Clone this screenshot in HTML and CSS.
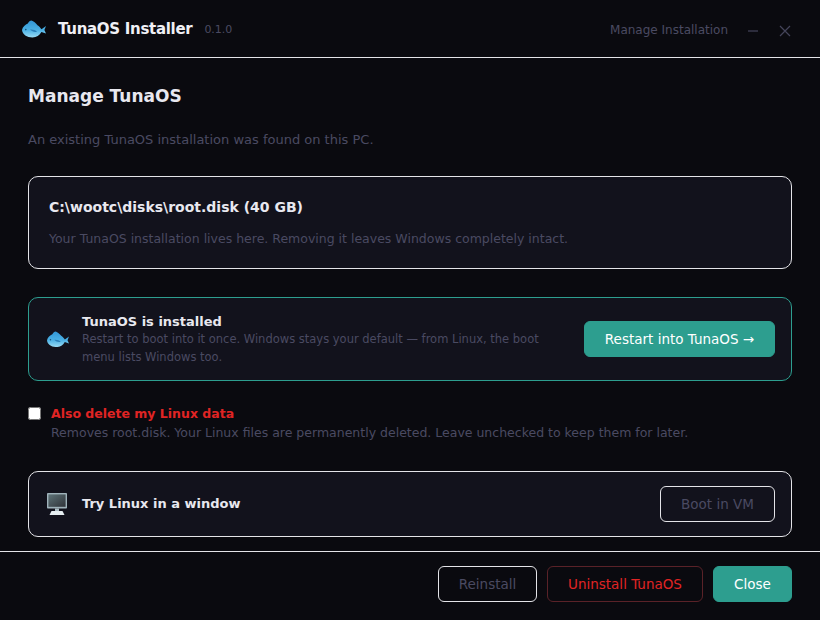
FILE: index.html
```html
<!DOCTYPE html>
<html lang="en">
<head>
<meta charset="utf-8">
<title>TunaOS Installer</title>
<link rel="stylesheet" href="styles.css">
</head>
<body>
<div class="app">
  <svg class="defs" aria-hidden="true"><defs>
    <linearGradient id="fishBody" x1="0" y1="0" x2="0" y2="1"><stop offset="0" stop-color="#3296d6"/><stop offset="0.55" stop-color="#4ab0e4"/><stop offset="1" stop-color="#9adcf5"/></linearGradient>
    <linearGradient id="screen" x1="0" y1="0" x2="1" y2="1"><stop offset="0" stop-color="#5e7378"/><stop offset="1" stop-color="#2f3238"/></linearGradient>
  </defs></svg>
  <header class="titlebar">
    <div class="brand">
      <svg class="fish fish-lg" viewBox="0 0 24 18" aria-hidden="true">
        <path d="M0 10 C0.5 7 3.5 4.8 5.8 3.6 C6.8 1.8 8 0.5 9.5 0.5 C11.5 1.2 14 3 15.5 5.2 C17 6 18.5 7.8 19.5 9.2 L24 6 L22.4 10 L24 13.6 L19.4 12 C17.6 15.4 14.5 17.5 10.5 17.5 C5 17.5 0.4 14.5 0 10 Z" fill="url(#fishBody)"/>
        <path d="M8 9.6 C10.5 9.2 13.5 10 15 11.8 C12.5 12.6 10 11.6 8 9.6 Z" fill="#2b7fb8"/>
        <circle cx="3.8" cy="9.6" r="0.8" fill="#164f78"/>
      </svg>
      <span class="app-name">TunaOS Installer</span>
      <span class="version">0.1.0</span>
    </div>
    <div class="window-side">
      <span class="mode">Manage Installation</span>
      <svg class="win-icon" viewBox="0 0 14 14" aria-hidden="true"><path d="M2 7 H12" /></svg>
      <svg class="win-icon" viewBox="0 0 14 14" aria-hidden="true"><path d="M2 2 L12 12 M12 2 L2 12" /></svg>
    </div>
  </header>

  <main class="content">
    <h1 class="heading">Manage TunaOS</h1>
    <p class="lead">An existing TunaOS installation was found on this PC.</p>

    <section class="card path-card">
      <div class="path">C:\wootc\disks\root.disk (40 GB)</div>
      <p class="path-note">Your TunaOS installation lives here. Removing it leaves Windows completely intact.</p>
    </section>

    <section class="card row-card installed">
      <svg class="fish fish-sm" viewBox="0 0 24 18" aria-hidden="true">
        <path d="M0 10 C0.5 7 3.5 4.8 5.8 3.6 C6.8 1.8 8 0.5 9.5 0.5 C11.5 1.2 14 3 15.5 5.2 C17 6 18.5 7.8 19.5 9.2 L24 6 L22.4 10 L24 13.6 L19.4 12 C17.6 15.4 14.5 17.5 10.5 17.5 C5 17.5 0.4 14.5 0 10 Z" fill="url(#fishBody)"/>
        <path d="M8 9.6 C10.5 9.2 13.5 10 15 11.8 C12.5 12.6 10 11.6 8 9.6 Z" fill="#2b7fb8"/>
        <circle cx="3.8" cy="9.6" r="0.8" fill="#164f78"/>
      </svg>
      <div class="row-text">
        <div class="row-title">TunaOS is installed</div>
        <p class="row-note">Restart to boot into it once. Windows stays your default — from Linux, the boot menu lists Windows too.</p>
      </div>
      <button class="btn btn-primary btn-restart" type="button">Restart into TunaOS →</button>
    </section>

    <label class="delete-option">
      <input class="delete-check" type="checkbox">
      <span class="delete-text">
        <span class="delete-title">Also delete my Linux data</span>
        <span class="delete-note">Removes root.disk. Your Linux files are permanently deleted. Leave unchecked to keep them for later.</span>
      </span>
    </label>

    <section class="card row-card vm">
      <svg class="monitor" viewBox="0 0 20 22" aria-hidden="true">
        <rect x="0" y="0" width="20" height="15.5" rx="0.8" fill="#9fb2ba"/>
        <rect x="1.4" y="1.4" width="17.2" height="12.4" fill="url(#screen)"/>
        <rect x="8" y="15.5" width="4" height="2.8" fill="#a9bac0"/>
        <path d="M4.5 18 H15.5 L17.5 22 H2.5 Z" fill="#e6eef1"/>
      </svg>
      <div class="row-text"><div class="row-title">Try Linux in a window</div></div>
      <button class="btn btn-outline btn-vm" type="button">Boot in VM</button>
    </section>
  </main>

  <footer class="actions">
    <button class="btn btn-outline btn-reinstall" type="button">Reinstall</button>
    <button class="btn btn-danger" type="button">Uninstall TunaOS</button>
    <button class="btn btn-primary btn-close" type="button">Close</button>
  </footer>
</div>
</body>
</html>
```

FILE: styles.css
```css
* { box-sizing: border-box; }
html, body { margin: 0; height: 100%; }
body { background: #0a0a0f; color: #e8e8ef; font-family: "DejaVu Sans", sans-serif; overflow: hidden; }
.app { width: 820px; height: 620px; display: flex; flex-direction: column; }
.defs { width: 0; height: 0; display: block; }

.titlebar { height: 58px; flex: none; display: flex; align-items: center; justify-content: space-between; padding: 1px 28px 0 22px; border-bottom: 1px solid #e4e4e8; }
.brand { display: flex; align-items: center; }
.fish { display: block; flex: none; }
.fish-lg { width: 24px; height: 18px; margin-right: 12px; }
.app-name { font-size: 15px; font-weight: 700; letter-spacing: -0.3px; color: #f0f0f5; }
.version { font-size: 11px; color: #4a4a62; margin-left: 12px; }
.window-side { display: flex; align-items: center; padding-top: 3px; }
.mode { font-size: 12px; color: #4a4a62; margin-right: 18px; position: relative; top: -1px; }
.win-icon { width: 14px; height: 14px; fill: none; stroke: #44445a; stroke-width: 1.2; display: block; }
.win-icon + .win-icon { margin-left: 18px; }

.content { flex: 1; padding: 0 28px; display: flex; flex-direction: column; min-height: 0; }
.heading { margin: 27px 0 0; font-size: 17px; line-height: 22px; font-weight: 700; color: #e8e8ef; }
.lead { margin: 25px 0 0; font-size: 13px; line-height: 16px; color: #4a4a62; }

.card { background: #12121c; border: 1px solid #e4e4e8; border-radius: 10px; }
.path-card { margin-top: 28px; height: 93px; padding: 20px 20px 0; }
.path { font-size: 14px; line-height: 20px; font-weight: 700; color: #e8e8ef; }
.path-note { margin: 14px 0 0; font-size: 12.5px; line-height: 16px; color: #4a4a62; }

.row-card { display: flex; align-items: center; padding: 0 16px 0 17px; }
.row-card .fish-sm { width: 22px; height: 16.5px; margin: 0 13px 0 1px; }
.installed { margin-top: 28px; height: 84px; border-color: #2d9e8f; }
.row-text { flex: 1; min-width: 0; }
.installed .row-text { padding-top: 2px; }
.row-title { font-size: 13px; line-height: 16px; font-weight: 700; color: #e8e8ef; }
.row-note { margin: 0; font-size: 11.5px; line-height: 18px; color: #4a4a62; width: 480px; }

.btn { font-family: inherit; font-size: 13.5px; height: 36px; border-radius: 6px; padding: 0; background: transparent; border: 1px solid #e4e4e8; }
.btn-primary { background: #2d9e8f; border-color: #2d9e8f; color: #fff; }
.btn-restart { width: 191px; }
.btn-outline { color: #4a4a62; }
.btn-reinstall { width: 99px; }
.btn-danger { width: 156px; color: #e02424; border-color: #5a2228; }

.delete-option { display: flex; align-items: flex-start; margin-top: 24px; }
.delete-check { width: 13px; height: 13px; margin: 2px 10px 0 0; flex: none; }
.delete-text { display: flex; flex-direction: column; }
.delete-title { font-size: 12.5px; line-height: 17px; font-weight: 700; color: #e02424; }
.delete-note { font-size: 12.5px; line-height: 21px; color: #4a4a62; }

.vm { margin-top: 28px; height: 66px; }
.monitor { width: 20px; height: 22px; margin: 0 15px 0 1px; flex: none; }
.btn-vm { width: 115px; }

.actions { height: 69px; flex: none; border-top: 1px solid #e4e4e8; display: flex; align-items: flex-start; justify-content: flex-end; gap: 10px; padding: 14px 28px 0; }
.btn-close { width: 79px; }
```
